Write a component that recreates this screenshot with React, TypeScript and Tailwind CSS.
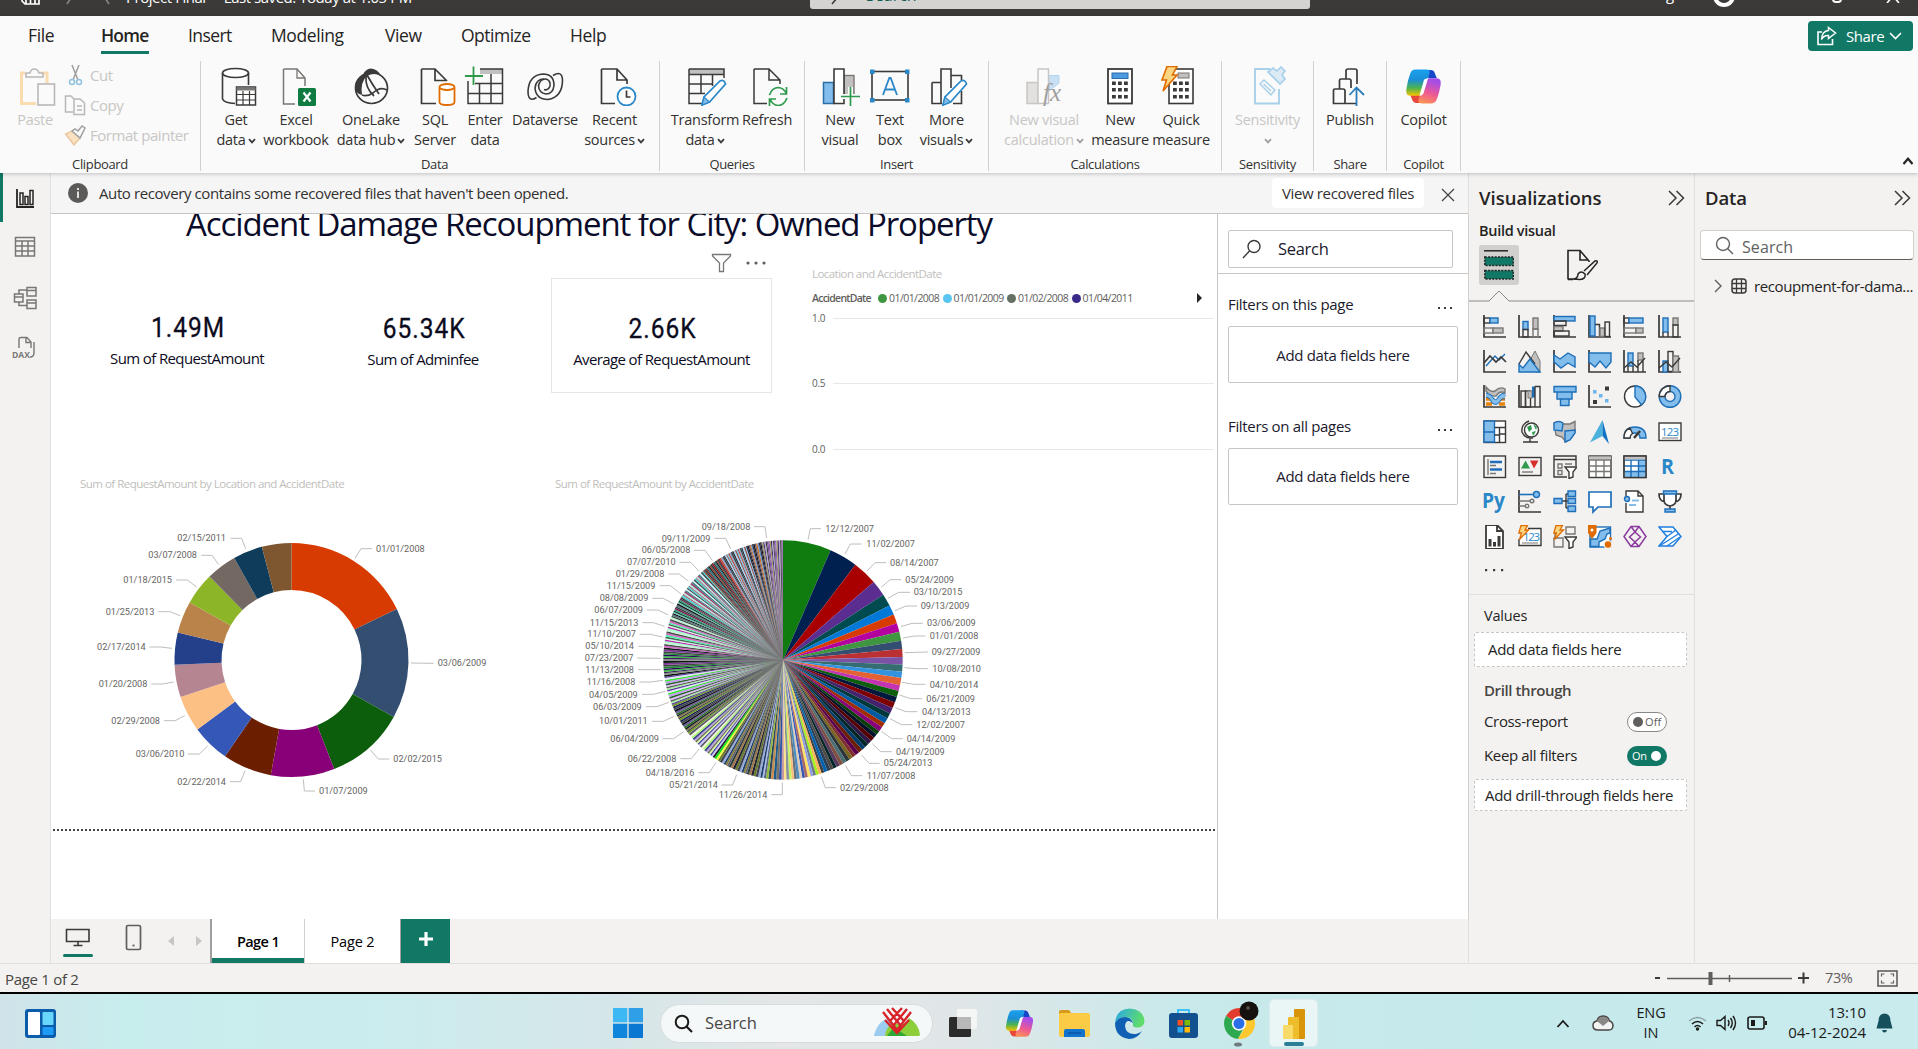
import React from "react";

const D = "#3b3a39";
const B = "#1e6fb8";
const L = "#83bdec";
const G = "#c2c0be";
const M = "#797775";

/* ---------- shared pieces ---------- */

function Svg({ w, h, children, className = "" }: { w: number; h: number; children: React.ReactNode; className?: string }) {
  return (
    <svg width={w} height={h} viewBox={`0 0 ${w} ${h}`} fill="none" className={`shrink-0 ${className}`}>
      {children}
    </svg>
  );
}

function Caret({ color = D }: { color?: string }) {
  return (
    <svg width="8" height="6" viewBox="0 0 8 6" fill="none" className="inline-block ml-[2px]">
      <path d="M1 1.2 L4 4.4 L7 1.2" stroke={color} strokeWidth="1.8" />
    </svg>
  );
}

function CopilotMark({ size }: { size: number }) {
  return (
    <svg width={size} height={size} viewBox="0 0 36 36" fill="none" className="shrink-0">
      <defs>
        <linearGradient id="cpa" x1="0" y1="0" x2="0" y2="1">
          <stop offset="0" stopColor="#1aa0ee" />
          <stop offset="0.4" stopColor="#1b8fd6" />
          <stop offset="0.7" stopColor="#4cb34f" />
          <stop offset="1" stopColor="#f5c400" />
        </linearGradient>
        <linearGradient id="cpb" x1="0.3" y1="0" x2="0" y2="1">
          <stop offset="0" stopColor="#a64de8" />
          <stop offset="0.5" stopColor="#ee5a92" />
          <stop offset="1" stopColor="#ff9c4a" />
        </linearGradient>
      </defs>
      <path d="M19 2 h6 q3 0 4 3 l2 5 h-8 z" fill="#1448c8" />
      <path d="M17 34 h-6 q-3 0 -4 -3 l-2 -5 h9 z" fill="#e8483c" />
      <path d="M10 1.5 H21 Q25 1.5 23.6 6 L17.5 23 Q16 27 12 27 H5 Q0.500 27 1.300 21 Q2.500 12 5 5.500 Q6.500 1.500 10 1.500 Z" fill="url(#cpa)" />
      <path d="M26 34.500 H16 Q12 34.500 13.400 30 L19 14.500 Q20.500 10 24.500 10 H31 Q35.500 10 34.700 16 Q33.500 24 31 30.500 Q29.500 34.500 26 34.500 Z" fill="url(#cpb)" />
      <path d="M18.500 11.500 Q20 10 22.500 10 L18 24.500 Q17 27 14 27 Z" fill="#fff" />
    </svg>
  );
}

/* ---------- ribbon icons, drawn on a 44x40 field ---------- */

const page = "M9.500 3 H23 L31 12 V20 M9.500 3 V38 H21";

const ribbonIcons: Record<string, React.ReactNode> = {
  get: (
    <>
      <ellipse cx="21.500" cy="7" rx="13" ry="4.500" stroke={D} strokeWidth="1.600" fill="#fff" />
      <path d="M8.500 7 V33 Q10 37 21 37.500 M34.500 7 V19" stroke={D} strokeWidth="1.600" />
      <rect x="22.500" y="21" width="19" height="18" fill="#fff" stroke={D} strokeWidth="1.500" />
      <path d="M22.500 23 h19" stroke={M} strokeWidth="3" />
      <path d="M22.500 28.500h19 M22.500 34h19 M29 25v14 M35.500 25v14" stroke={D} strokeWidth="1.200" />
    </>
  ),
  excel: (
    <>
      <path d={page} stroke={M} strokeWidth="1.500" />
      <path d="M23 3 V12 H31" stroke={M} strokeWidth="1.300" />
      <rect x="24" y="22" width="18" height="18" rx="1.500" fill="#107c41" />
      <path d="M29.500 26.500 L36.500 35.500 M36.500 26.500 L29.500 35.500" stroke="#fff" strokeWidth="2.200" />
    </>
  ),
  onelake: (
    <>
      <ellipse cx="22.500" cy="22" rx="16" ry="15.500" stroke={D} strokeWidth="1.700" />
      <path d="M14 9 Q16 3 22 2.500 Q29 3 32 10 Q25 6 18 10 Q11 16 13 29 Q5 27 6 19 Q8 12 14 9Z" fill={D} />
      <path d="M17 10 Q16 22 25 30 M18 9 Q23 18 30 28 M13 29 Q18 31 24 27 Q31 20 38 24" stroke={D} strokeWidth="1.700" />
    </>
  ),
  sql: (
    <>
      <path d="M8.500 3 H22 L34 15 M8.500 3 V37.500 H23 M22 3 V14.500 H33" stroke={D} strokeWidth="1.700" />
      <path d="M26.500 21.500 V36 Q26.500 39 34 39 Q41.500 39 41.500 36 V21.500" stroke="#e06c00" strokeWidth="1.800" fill="#fff" />
      <ellipse cx="34" cy="21" rx="7.500" ry="3" stroke="#e06c00" strokeWidth="1.800" fill="#fff" />
    </>
  ),
  enter: (
    <>
      <rect x="17" y="3" width="22.500" height="5" fill={G} />
      <path d="M5 15 V37.500 H39.500 V3 H17 M5 27.500 H39.500 M12 17.500 H39.500 M16.500 17 V37 M28 8 V37" stroke={D} strokeWidth="1.500" />
      <path d="M10.500 0.500 V19 M2 10 H20" stroke="#2e9a4c" strokeWidth="1.800" />
    </>
  ),
  dataverse: (
    <>
      <path d="M13.500 31.500 Q5 37 5 25 Q6 9 20 8 Q31 8 31 19.500 Q30 28 23 28 Q16 27 15.500 20 Q17 12.500 23 13 Q28 14.500 27 20 Q25 25 21 23.500" stroke={D} strokeWidth="1.600" />
      <path d="M30 9.500 Q39 4 39.500 14 Q39.500 31 25 33.500 Q13 33.500 12 22 Q13 13 21 13" stroke={D} strokeWidth="1.600" />
    </>
  ),
  recent: (
    <>
      <path d="M8.500 3 H24 L34 14 V18 M8.500 3 V37.500 H22 M24 3 V14 H34" stroke={D} strokeWidth="1.700" />
      <circle cx="33.500" cy="30.500" r="9" stroke="#2b88c8" strokeWidth="1.800" fill="#fff" />
      <path d="M33.500 24.500 V31 H37.500" stroke={D} strokeWidth="1.700" />
    </>
  ),
  transform: (
    <>
      <rect x="6" y="3" width="35" height="5" fill={G} />
      <path d="M6 3 H41 V8.500 H6 M6 3 V37.500 H19 M41 3 V12 M18 8.500 V27 M29.500 8.500 V20 M6 18 H30 M6 27.500 H22" stroke={D} strokeWidth="1.500" />
      <path d="M19 39 L21 31 L37 15 Q41 13 42.500 18 L26.500 36 Z" fill="#fff" stroke="#2b88c8" strokeWidth="1.700" />
      <path d="M19 39 L21 31 L26.500 36 Z" fill="#83bdec" stroke="#2b88c8" strokeWidth="1.200" />
    </>
  ),
  refresh: (
    <>
      <path d="M9 3 H24 L35 14 V18 M9 3 V37.500 H22 M24 3 V14 H35" stroke={D} strokeWidth="1.500" />
      <path d="M24.500 29 Q27 21.500 33.500 21.500 Q39 22 41.500 28 M41.500 21 V28 H35 M42 32 Q39 39.500 33 39.500 Q27.500 39 25 33 M24.500 40 V33 H31" stroke="#2e9a4c" strokeWidth="1.700" />
    </>
  ),
  newvisual: (
    <>
      <rect x="26" y="9.500" width="10" height="20" fill={G} stroke={M} strokeWidth="1.400" />
      <rect x="5.500" y="16.500" width="10" height="21" fill={L} stroke="#2b6ea8" strokeWidth="1.500" />
      <path d="M16 3 H26 V37.500 H16 Z" fill="#fff" stroke={D} strokeWidth="1.600" />
      <path d="M32.500 21 V40 M23 30.500 H42" stroke="#fafafa" strokeWidth="5" />
      <path d="M32.500 21 V40 M23 30.500 H42" stroke="#2e9a4c" strokeWidth="1.700" />
    </>
  ),
  textbox: (
    <>
      <rect x="4" y="5.500" width="36" height="28.500" stroke={D} strokeWidth="1.600" />
      {[[2, 3.5], [37, 3.5], [2, 32], [37, 32]].map(([x, y]) => (
        <rect key={`${x}-${y}`} x={x} y={y} width="4.500" height="4.500" fill="#2b88c8" />
      ))}
      <path d="M15 29 L21.300 12 H22.700 L29 29 M17.500 23.500 H26.500" stroke="#2b88c8" strokeWidth="1.800" />
    </>
  ),
  more: (
    <>
      <path d="M7 16.500 H16 M7 16.500 V37.500 H17 M16 37.500 V3 H26 V22 M26 9.500 H36.500 V14 M28 37.500 H36.500 V25" stroke={D} strokeWidth="1.600" />
      <path d="M18 39 L20 31 L36 15 Q40 13 41.500 18 L25.500 36 Z" fill="#fff" stroke="#2b88c8" strokeWidth="1.700" />
      <path d="M18 39 L20 31 L25.500 36 Z" fill="#83bdec" stroke="#2b88c8" strokeWidth="1.200" />
    </>
  ),
  calc: (
    <>
      <rect x="5" y="16.500" width="11" height="21" fill="#e3e1df" stroke="#c8c6c4" strokeWidth="1.500" />
      <path d="M27 9.500 H37 V17 L27 25 Z" fill="#c7e0f4" stroke="#b5d4ee" />
      <rect x="16" y="3" width="10.500" height="34.500" fill="#fafafa" stroke="#c8c6c4" strokeWidth="1.500" />
      <text x="21" y="35" fontFamily="Liberation Serif, serif" fontStyle="italic" fontSize="25" fill="#a19f9d">fx</text>
    </>
  ),
  measure: (
    <>
      <rect x="10" y="3" width="24" height="34.500" stroke={D} strokeWidth="1.800" fill="#fff" />
      <rect x="14" y="7" width="16" height="5.500" fill="#4a9be0" stroke="#2b6ea8" />
      {[15.5, 22, 29].map((y) => [14, 20, 26].map((x) => <rect key={`${x}-${y}`} x={x} y={y} width="3.800" height="3.500" fill={D} />))}
    </>
  ),
  quick: (
    <>
      <rect x="10" y="3" width="24" height="34.500" stroke={D} strokeWidth="1.600" fill="#fff" />
      <rect x="19" y="7" width="11" height="5" fill={G} stroke={M} />
      {[15.5, 22, 29].map((y) => [14, 20, 26].map((x) => <rect key={`${x}-${y}`} x={x} y={y} width="3.800" height="3.500" fill={D} />))}
      <path d="M8 0.500 H18 L13.500 9 H18 L4 25 L7.500 14 H3 Z" fill="#fcd583" stroke="#e06c00" strokeWidth="1.600" />
    </>
  ),
  sensitivity: (
    <>
      <path d="M24 3 H9 V37.500 H33 V23" stroke="#a9d0ea" strokeWidth="1.900" />
      <path d="M14 18 L18 14 L29 24 L25 29 Z M17.500 18 L25 25" stroke="#a9d0ea" strokeWidth="1.500" />
      <path d="M22 6 L27 2 L31 5 L35 1 L39 5 L36 9 L39 13 L34 18 Z" fill="#dbeaf4" stroke="#a9d0ea" strokeWidth="1.700" />
    </>
  ),
  publish: (
    <>
      <path d="M5.500 37.500 V24 Q5.500 23 7 23 H15 Q17 23 17 25 V37.500 Z M11.500 23 V14.500 Q11.500 13 13 13 H21 Q23 13 23 15 V22 M18 13 V5 Q18 3 20 3 H27 Q29 3 29 5 V18 M17 37.500 H28" stroke={D} strokeWidth="1.700" />
      <path d="M28.500 40 V21.500 M21.500 29 L28.500 21.500 L36 29" stroke="#2b7cb8" strokeWidth="1.800" />
    </>
  ),
};

function RB({ icon, a, b, caret, dim, className }: { icon: string; a: string; b?: string; caret?: boolean; dim?: boolean; className: string }) {
  return (
    <div className={`flex flex-col items-center shrink-0 ${dim ? "text-[#c8c6c4]" : "text-[#323130]"} ${className}`}>
      <div className="h-10 flex items-center justify-center">
        {icon === "copilot" ? <CopilotMark size={37} /> : <Svg w={44} h={40}>{ribbonIcons[icon]}</Svg>}
      </div>
      <div className="text-[14.5px] leading-5 text-center whitespace-nowrap tracking-[-0.25px] mt-[4px]">
        <div>{a}</div>
        <div className="h-5">
          {b}
          {caret && <Caret color={dim ? "#a19f9d" : D} />}
        </div>
      </div>
    </div>
  );
}

function Group({ label, className, children }: { label: string; className: string; children: React.ReactNode }) {
  return (
    <div className={`relative h-[110px] mt-[3px] border-r border-[#d2d0ce] flex flex-col shrink-0 ${className}`}>
      <div className="flex h-[92px] shrink-0 pt-[5px]">{children}</div>
      <div className="text-[13px] leading-[17px] pt-[3px] text-center text-[#323130] tracking-[-0.35px]">{label}</div>
    </div>
  );
}

function TitleBar() {
  return (
    <div className="relative h-4 shrink-0 bg-[#3b3a38] overflow-hidden text-white">
      <div className="absolute left-[21px] -top-[12px] flex items-center">
        <Svg w={20} h={17}><path d="M1 0 V13 L4 16 H18 V0 M5 16 V8 H14 V16 M9.500 16 V11" stroke="#fff" strokeWidth="1.700" /></Svg>
      </div>
      <div className="absolute left-[66px] -top-[5px] flex gap-[27px]">
        <Svg w={9} h={10}><path d="M7 0 L1 9" stroke="#8a8886" strokeWidth="1.500" /></Svg>
        <Svg w={9} h={10}><path d="M1 0 L7 9" stroke="#8a8886" strokeWidth="1.500" /></Svg>
      </div>
      <div className="absolute left-[126px] -top-[13px] text-[15px] leading-5 whitespace-pre tracking-[-0.46px]">Project Final  -  Last saved: Today at 1:05 PM</div>
      <div className="absolute left-[810px] -top-[20px] h-[29px] w-[500px] rounded-[3px] bg-[#d4d3d1] text-[#0f5c4d] text-[16px] leading-[30px] pl-[56px]">Search</div>
      <div className="absolute left-[831px] -top-[2px]"><Svg w={8} h={8}><path d="M1 6 L6 0" stroke="#3b3a38" strokeWidth="1.600" /></Svg></div>
      <div className="absolute left-[1666px] -top-[16px] text-[15px] leading-5">g</div>
      <div className="absolute left-[1713px] -top-[15px] size-[22px] rounded-full border-[4px] border-white" />
      <div className="absolute left-[1832px] -top-[8px] h-[11px] w-[10px] rounded-sm border-2 border-white" />
      <div className="absolute left-[1886px] -top-[9px]"><Svg w={14} h={12}><path d="M1 12 L7 5 L13 12" stroke="#fff" strokeWidth="1.600" /></Svg></div>
    </div>
  );
}

function Ribbon() {
  return (
    <div className="relative z-10 h-[157px] shrink-0 bg-[#fafafa] shadow-[0_1px_4px_rgba(0,0,0,0.22)]">
      <div className="flex h-[42px] items-start justify-between pr-[5px]">
        <div className="flex text-[17.5px] leading-6 pt-[7px] tracking-[-0.4px] text-[#252423] whitespace-nowrap">
          <div className="w-[73px] pl-[28px]">File</div>
          <div className="w-[87px] pl-[28px] font-semibold"><span className="inline-block w-[48px] h-[31px] border-b-[3px] border-[#117865] tracking-[-0.8px]">Home</span></div>
          <div className="w-[83px] pl-[28px] tracking-[-0.6px]">Insert</div>
          <div className="w-[114px] pl-[28px]">Modeling</div>
          <div className="w-[76px] pl-[28px]">View</div>
          <div className="w-[109px] pl-[28px] tracking-[-0.5px]">Optimize</div>
          <div className="pl-[28px]">Help</div>
        </div>
        <div className="mt-[5px] h-[30px] w-[105px] rounded-[4px] bg-[#117865] text-white flex items-center pl-[9px] text-[15px]">
          <Svg w={20} h={20}>
            <path d="M5 6 H1 V18.500 H15.500 V13" stroke="#fff" strokeWidth="1.600" />
            <path d="M11.500 1.500 L18.500 7 L11.500 12.500 V9.500 Q7 9 4.500 13.500 Q5 5 11.500 4.500 Z" stroke="#fff" strokeWidth="1.500" />
          </Svg>
          <span className="ml-[9px] tracking-[-0.4px]">Share</span>
          <Svg w={13} h={8} className="ml-[5px]"><path d="M1 1 L6.500 6.500 L12 1" stroke="#fff" strokeWidth="1.600" /></Svg>
        </div>
      </div>
      <div className="flex">
        <Group label="Clipboard" className="w-[201px]">
          <div className="w-[62px] pl-[10px] shrink-0 text-[#c8c6c4] text-[14.5px] flex flex-col items-center">
            <Svg w={44} h={40} className="ml-[7px]">
              <path d="M7 7 H3.500 V37.500 H18 M23 7 H29 V17" stroke="#fbdcae" strokeWidth="3" />
              <path d="M8 11 V7 H12 Q13 3 16 3 Q20 3 21 7 H25 V11 Z" fill="#fafafa" stroke="#bab8b6" strokeWidth="1.500" />
              <rect x="20" y="18" width="16.500" height="21" fill="#fafafa" stroke="#bab8b6" strokeWidth="1.600" />
            </Svg>
            <div className="mt-[4px] leading-5 pr-[2px] tracking-[-0.3px]">Paste</div>
          </div>
          <div className="flex flex-col text-[#c8c6c4] text-[15px] whitespace-nowrap tracking-[-0.45px] ml-[2px]">
            <div className="flex items-center h-[30px] -mt-[6px] gap-[3px]"><Svg w={23} h={22}><path d="M8 1 L14 16 M15 1 L9 16" stroke="#a19f9d" strokeWidth="1.500" /><circle cx="8" cy="18" r="2.500" stroke="#8fc3e0" strokeWidth="1.500" /><circle cx="15" cy="18" r="2.500" stroke="#8fc3e0" strokeWidth="1.500" /></Svg>Cut</div>
            <div className="flex items-center h-[30px] gap-[3px]"><Svg w={23} h={22}><path d="M9 18 H1.500 V2 H7 L10 5 M10 5 H16 L20.500 9 V20.500 H10 Z M13 12 H18 M13 16 H18" stroke="#bab8b6" strokeWidth="1.500" /></Svg>Copy</div>
            <div className="flex items-center h-[30px] gap-[3px]"><Svg w={23} h={22}><path d="M1.500 10 L8 7 L16 14 L10 21 Z" fill="#f9e0c0" stroke="#e8c49a" strokeWidth="1.300" /><path d="M8 7 L16 14 L21 4 L18 2 L14 7 L11 5 Z" fill="#fafafa" stroke="#a19f9d" strokeWidth="1.500" /></Svg>Format painter</div>
          </div>
        </Group>
        <Group label="Data" className="w-[459px] pl-[9px]">
          <RB icon="get" a="Get" b="data" caret className="w-[52px]" />
          <RB icon="excel" a="Excel" b="workbook" className="w-[68px]" />
          <RB icon="onelake" a="OneLake" b="data hub" caret className="w-[78px] ml-[2px]" />
          <RB icon="sql" a="SQL" b="Server" className="w-[50px]" />
          <RB icon="enter" a="Enter" b="data" className="w-[50px]" />
          <RB icon="dataverse" a="Dataverse" className="w-[70px]" />
          <RB icon="recent" a="Recent" b="sources" caret className="w-[69px]" />
        </Group>
        <Group label="Queries" className="w-[145px] pl-[12px] pr-[12px]">
          <RB icon="transform" a="Transform" b="data" caret className="w-[66px]" />
          <RB icon="refresh" a="Refresh" className="w-[50px] ml-[4px]" />
        </Group>
        <Group label="Insert" className="w-[184px] pl-[10px] pr-[10px]">
          <RB icon="newvisual" a="New" b="visual" className="w-[50px]" />
          <RB icon="textbox" a="Text" b="box" className="w-[50px]" />
          <RB icon="more" a="More" b="visuals" caret className="w-[63px]" />
        </Group>
        <Group label="Calculations" className="w-[233px] pl-[10px] pr-[10px]">
          <RB icon="calc" a="New visual" b="calculation" caret dim className="w-[90px]" />
          <RB icon="measure" a="New" b="measure" className="w-[60px] ml-px" />
          <RB icon="quick" a="Quick" b="measure" className="w-[60px] ml-px" />
        </Group>
        <Group label="Sensitivity" className="w-[92px]">
          <RB icon="sensitivity" a="Sensitivity" caret dim className="w-[91px]" />
        </Group>
        <Group label="Share" className="w-[73px]">
          <RB icon="publish" a="Publish" className="w-[72px]" />
        </Group>
        <Group label="Copilot" className="w-[74px]">
          <RB icon="copilot" a="Copilot" className="w-[73px]" />
        </Group>
        <div className="flex-1 flex justify-end items-end pr-[4px] pb-[6px]">
          <Svg w={12} h={8}><path d="M1.500 7 L6 1.800 L10.500 7" stroke="#252423" strokeWidth="2.200" /></Svg>
        </div>
      </div>
    </div>
  );
}

function LeftRail() {
  return (
    <div className="w-[51px] shrink-0 bg-[#f3f2f1] border-r border-[#e1dfdd] flex flex-col items-center relative">
      <div className="absolute left-0 top-0 h-[49px] w-[3px] bg-[#117865]" />
      <div className="h-[49px] flex items-center"><Svg w={20} h={20}><path d="M2 1 V19 H19" stroke="#252423" strokeWidth="1.800" /><path d="M5 5 H8 V16.500 H5 Z M10 8.500 H13 V16.500 H10 Z M15 2.500 H18 V16.500 H15Z" stroke="#252423" strokeWidth="1.500" /></Svg></div>
      <div className="h-[50px] flex items-center"><Svg w={22} h={22}><path d="M1.500 1.500 H20.500 V20 H1.500 Z M1.500 5 H20.500 M1.500 10 H20.500 M1.500 15 H20.500 M8 5 V20 M14 5 V20" stroke={M} strokeWidth="1.500" /></Svg></div>
      <div className="h-[52px] flex items-center"><Svg w={24} h={24}><path d="M14 1.500 H23 V10 H14 Z M14 4.500 H23 M14 14 H23 V22.500 H14 Z M14 17 H23 M1.500 8 H10 V16 H1.500 Z M1.500 11 H10 M6 8 V4 H14 M6 16 V19.500 H14" stroke={M} strokeWidth="1.500" /></Svg></div>
      <div className="h-[48px] flex items-center"><Svg w={24} h={24} className="mr-[2px]"><path d="M7 12 V3 Q7 1.500 9 1.500 H15 L19 6 V12 M14 1.500 V6.500 H19 M22 6 V17 Q22 21 18 21" stroke={M} strokeWidth="1.400" /><text x="0" y="21.500" fontSize="8.500" fontWeight="700" fontFamily="Open Sans, sans-serif" fill={M}>DAX</text></Svg></div>
    </div>
  );
}

/* ---------- charts ---------- */

type Label = [string, number, number, string];

function arc(cx: number, cy: number, r: number, r0: number, a0: number, a1: number) {
  const p = (rad: number, a: number) => {
    const t = (a * Math.PI) / 180;
    return `${(cx + rad * Math.sin(t)).toFixed(2)} ${(cy - rad * Math.cos(t)).toFixed(2)}`;
  };
  const big = a1 - a0 > 180 ? 1 : 0;
  return r0 > 0
    ? `M${p(r, a0)} A${r} ${r} 0 ${big} 1 ${p(r, a1)} L${p(r0, a1)} A${r0} ${r0} 0 ${big} 0 ${p(r0, a0)} Z`
    : `M${cx} ${cy} L${p(r, a0)} A${r} ${r} 0 ${big} 1 ${p(r, a1)} Z`;
}

function Labels({ left, right }: { left: Label[]; right: Label[] }) {
  const render = (l: Label, x: number) => (
    <g key={l[0] + l[2]}>
      <polyline points={l[3]} stroke="#c0bebc" strokeWidth="3" fill="none" />
      <text x={x} y={l[2] + 10} fontSize="29.500" fontFamily="Roboto, sans-serif" fill="#666462" textLength="146" lengthAdjust="spacingAndGlyphs">{l[0]}</text>
    </g>
  );
  return (
    <>
      {right.map((l) => render(l, l[1]))}
      {left.map((l) => render(l, l[1] - 146))}
    </>
  );
}

const donutStops = [0, 64.2, 119.1, 158.6, 190.2, 214.6, 233.6, 251.5, 267.7, 283.6, 299.5, 315.5, 330.7, 345.3, 360];
const donutColors = ["#d83b01", "#344e71", "#0c5d0c", "#870077", "#6b1e00", "#3457b8", "#fcc084", "#b68592", "#25408a", "#b98349", "#8db528", "#736962", "#0f3c5a", "#7e5731"];
const donutRight: Label[] = [
  ["01/01/2008", 948, 236, "885,265 903,236 936,236"],
  ["03/06/2009", 1133, 578, "1053,579 1121,580"],
  ["02/02/2015", 1000, 866, "931,840 955,867 988,867"],
  ["01/07/2009", 777, 962, "730,928 733,963 765,963"],
];
const donutLeft: Label[] = [
  ["02/15/2011", 498, 203, "557,236 545,205 512,205"],
  ["03/07/2008", 411, 254, "476,284 456,256 424,256"],
  ["01/18/2015", 336, 329, "410,351 382,330 348,330"],
  ["01/25/2013", 283, 425, "360,437 330,425 295,425"],
  ["02/17/2014", 257, 530, "336,535 302,531 268,531"],
  ["01/20/2008", 262, 641, "341,636 308,642 274,642"],
  ["02/29/2008", 300, 751, "374,737 346,752 312,752"],
  ["03/06/2010", 373, 851, "443,828 418,852 384,852"],
  ["02/22/2014", 498, 935, "555,902 542,935 510,935"],
];

function Donut() {
  return (
    <svg width="480" height="360" viewBox="0 0 1440 1080" fill="none">
      {donutColors.map((c, i) => (
        <path key={c} d={arc(694.5, 570, 351, 210, donutStops[i], donutStops[i + 1])} fill={c} />
      ))}
      <Labels left={donutLeft} right={donutRight} />
    </svg>
  );
}

const pieRight: Label[] = [
  ["12/12/2007", 796, 86, "744,119 751,86 783,86"],
  ["11/02/2007", 919, 131, "855,162 871,132 905,132"],
  ["08/14/2007", 990, 188, "921,213 945,188 978,188"],
  ["05/24/2009", 1036, 239, "964,262 990,239 1023,239"],
  ["03/10/2015", 1061, 275, "984,295 1016,277 1050,277"],
  ["09/13/2009", 1082, 317, "1005,332 1038,318 1071,318"],
  ["03/06/2009", 1101, 368, "1023,380 1056,370 1088,370"],
  ["01/01/2008", 1109, 407, "1029,414 1062,408 1096,408"],
  ["09/27/2009", 1115, 455, "1034,458 1104,456"],
  ["10/08/2010", 1117, 506, "1033,503 1068,506 1104,506"],
  ["04/10/2014", 1109, 554, "1026,547 1062,553 1096,553"],
  ["06/21/2009", 1099, 596, "1018,585 1052,596 1086,596"],
  ["04/13/2013", 1086, 635, "1006,623 1038,635 1072,635"],
  ["12/02/2007", 1069, 674, "990,656 1024,674 1057,674"],
  ["04/14/2009", 1040, 716, "965,694 995,716 1028,716"],
  ["04/19/2009", 1008, 755, "937,731 962,755 995,755"],
  ["05/24/2013", 971, 788, "904,764 927,790 959,790"],
  ["11/07/2008", 920, 827, "857,797 874,827 907,827"],
  ["02/29/2008", 840, 863, "784,830 796,863 828,863"],
];
const pieLeft: Label[] = [
  ["11/26/2014", 622, 884, "667,847 667,884 634,884"],
  ["05/21/2014", 474, 854, "530,824 518,855 485,855"],
  ["04/18/2016", 403, 818, "468,787 448,818 415,818"],
  ["06/22/2008", 349, 776, "417,747 394,776 361,776"],
  ["06/04/2009", 297, 716, "371,695 341,716 308,716"],
  ["10/01/2011", 263, 662, "342,649 310,664 276,664"],
  ["06/03/2009", 245, 620, "326,607 291,620 258,620"],
  ["04/05/2009", 233, 583, "316,574 280,583 246,583"],
  ["11/16/2008", 226, 545, "309,541 272,546 238,546"],
  ["11/13/2008", 222, 509, "302,509 234,509"],
  ["07/23/2007", 220, 473, "302,475 232,474"],
  ["05/10/2014", 222, 437, "308,441 268,439 235,439"],
  ["11/10/2007", 228, 401, "307,411 272,403 239,403"],
  ["11/15/2013", 235, 368, "314,379 280,368 247,368"],
  ["06/07/2009", 249, 329, "325,345 294,330 261,330"],
  ["08/08/2009", 265, 293, "341,312 310,295 277,295"],
  ["11/15/2009", 286, 257, "363,282 331,257 299,257"],
  ["01/29/2008", 313, 221, "386,244 358,222 325,222"],
  ["07/07/2010", 347, 185, "417,214 392,187 359,187"],
  ["06/05/2008", 391, 149, "457,181 435,151 402,151"],
  ["09/11/2009", 451, 116, "512,147 497,115 463,115"],
  ["09/18/2008", 571, 80, "620,115 615,80 582,80"],
];

const pieHead: [number, string][] = [
  [23.4, "#107c10"], [37.2, "#002050"], [49.3, "#a80000"], [56.9, "#5c2d91"], [62.9, "#004b50"], [67.7, "#0078d7"],
  [72.1, "#d83b01"], [76.4, "#b4009e"], [80.8, "#409640"], [84.7, "#344e71"], [88.6, "#ba3033"], [92.1, "#7b53a6"],
  [95.6, "#346e72"], [98.7, "#3393df"], [102.2, "#e36133"], [105, "#c333b2"], [108, "#0c5d0c"], [110.8, "#00183c"],
  [113.7, "#7e0000"], [116.6, "#45226d"], [119.2, "#00383c"], [121.9, "#005aa1"], [124.2, "#a22c01"], [126.5, "#870077"],
  [128.5, "#083e08"], [130.5, "#001028"], [132.6, "#540000"], [134.6, "#2e1749"], [136.6, "#002628"], [138.6, "#003c6b"],
  [140.6, "#6c1e01"], [142.6, "#5a004f"], [144.4, "#802f31"], [146.2, "#7a651e"], [148, "#2a3338"], [149.8, "#4a7074"],
  [151.6, "#7f4f42"], [153.4, "#573a5c"], [155, "#00282a"], [156.6, "#4f4a46"], [158.2, "#2d3e52"], [159.8, "#0063b1"],
  [161.2, "#3a4046"], [162.6, "#fcb05c"], [164, "#a4ef1d"], [165.3, "#6c7a86"], [166.6, "#8f9ee0"], [168, "#ffe066"],
  [169.4, "#a86868"], [170.7, "#3457b8"], [172, "#dccbb8"], [173.3, "#4a8bc0"], [174.6, "#66727c"], [175.8, "#fbbb7c"],
  [177, "#c4f25e"], [178.4, "#8a939c"],
];

const tailZones: [number, number, string[]][] = [
  [190, 1.15, ["#aab8f0", "#fbe38a", "#c49aa0", "#2f4fa8", "#7c7469", "#1b5a8c", "#c68d50", "#2d4657", "#8fb83a", "#5a6a84"]],
  [213, 1.0, ["#5c6470", "#8a7c34", "#1c3f68", "#94a8d8", "#3b3f52", "#6b7a2c", "#1f2430", "#a0764a", "#2b3c3c"]],
  [216, 0.9, ["#1414b8", "#f8f840", "#18e818", "#202030"]],
  [232, 0.85, ["#c8c4f4", "#4f46a8", "#d8ff9c", "#6a7058", "#b8a4d8", "#3c3c90", "#a8f878", "#f4f4dc", "#5a5a6a"]],
  [248, 0.8, ["#1c1c58", "#6f9c20", "#3a3a40", "#8a7848", "#14202c", "#2c7020", "#6c5c98", "#0c0c1c", "#40484c"]],
  [262, 0.8, ["#c898f8", "#38e838", "#e4e4f8", "#5a38a0", "#a8f8a0", "#5c5c5c", "#d8b8f8", "#286828"]],
  [276, 0.8, ["#2c0858", "#1f8838", "#404840", "#7c3898", "#0c1810", "#8a9088", "#3c1c5c", "#3cb848"]],
  [291, 0.75, ["#9fffc8", "#b82ca8", "#d8f8e8", "#486858", "#48f8a8", "#d868c8", "#4c4c4c", "#c8f0d8"]],
  [302, 0.7, ["#0c3c38", "#2ca870", "#801058", "#384840", "#587878", "#181020", "#68c8a8"]],
  [318, 0.7, ["#a8f0e0", "#a03868", "#388088", "#d8f4f4", "#404848", "#38d8d8", "#b07888"]],
  [328, 0.65, ["#104048", "#901018", "#404848", "#287880", "#101418", "#984030"]],
  [342, 0.65, ["#68c8f0", "#c04838", "#88a0c8", "#384048", "#303840", "#a0d8f8", "#985050"]],
  [350, 0.6, ["#181018", "#685c68", "#d07020", "#6890c8", "#202840"]],
  [360, 0.55, ["#8858b8", "#a0a058", "#402c68", "#b8a8d8", "#383838", "#785090"]],
];

const pieSlices = (() => {
  const out = pieHead.slice();
  let a = 178.4;
  let i = 0;
  for (const [end, step, colors] of tailZones) {
    while (a < end) {
      i += 1;
      a = Math.min(end, a + step * (0.85 + 0.3 * Math.abs(Math.sin(i * 12.9))));
      out.push([a, colors[i % colors.length]]);
    }
  }
  return out;
})();

function Pie() {
  return (
    <svg width="480" height="320" viewBox="0 0 1440 960" fill="none">
      <defs>
        <radialGradient id="core" gradientUnits="userSpaceOnUse" cx="669" cy="480" r="359">
          <stop offset="0" stopColor="#6c6c6c" stopOpacity="0.75" />
          <stop offset="0.4" stopColor="#6c6c6c" stopOpacity="0.25" />
          <stop offset="0.8" stopColor="#6c6c6c" stopOpacity="0" />
        </radialGradient>
      </defs>
      {pieSlices.map(([end, c], i) => (
        <path key={i} d={arc(669, 480, 359, 0, i ? pieSlices[i - 1][0] : 0, end)} fill={c} />
      ))}
      <path d={arc(669, 480, 359, 0, 190, 359.9)} fill="url(#core)" />
      <Labels left={pieLeft} right={pieRight} />
    </svg>
  );
}

function Kpi({ value, label, className }: { value: string; label: string; className: string }) {
  return (
    <div className={`absolute flex flex-col items-center ${className}`}>
      <div className="font-['Roboto'] text-[28.5px] leading-8 tracking-[1.2px] pl-[2px] text-[#0b0b1e] scale-x-[0.86] [-webkit-text-stroke:0.3px_#0b0b1e]">{value}</div>
      <div className="text-[15px] leading-5 mt-[4px] text-[#0b0b1e] tracking-[-0.62px] whitespace-nowrap">{label}</div>
    </div>
  );
}

function Canvas() {
  return (
    <div className="relative flex-1 bg-white overflow-hidden border-r border-[#c8c6c4]">
      <div className="absolute left-[135px] -top-[12px] text-[33px] leading-[44px] tracking-[-1.08px] whitespace-nowrap text-[#0b0b2a]">Accident Damage Recoupment for City: Owned Property</div>
      <Kpi value="1.49M" label="Sum of RequestAmount" className="left-[36px] top-[98px] w-[200px]" />
      <Kpi value="65.34K" label="Sum of Adminfee" className="left-[272px] top-[99px] w-[200px]" />
      <div className="absolute left-[500px] top-[64px] w-[221px] h-[115px] border border-[#e6e6e6]" />
      <Kpi value="2.66K" label="Average of RequestAmount" className="left-[500px] top-[99px] w-[221px]" />
      <div className="absolute left-[660px] top-[39px] flex items-center gap-[14px]">
        <Svg w={21} h={20}><path d="M1.500 1.500 H19.500 V3 L12.500 10 V18.500 H8.500 V10 L1.500 3 Z" stroke={M} strokeWidth="1.300" /></Svg>
        <Svg w={20} h={20}><circle cx="2" cy="10" r="1.600" fill="#605e5c" /><circle cx="10" cy="10" r="1.600" fill="#605e5c" /><circle cx="18" cy="10" r="1.600" fill="#605e5c" /></Svg>
      </div>

      <div className="absolute left-[761px] top-[52px] w-[402px]">
        <div className="text-[11.5px] leading-4 text-[#c0bebc] tracking-[-0.55px]">Location and AccidentDate</div>
        <div className="mt-[8px] flex items-center h-4 text-[10.5px] leading-4 text-[#605e5c] whitespace-nowrap tracking-[-0.55px]">
          <span className="font-semibold w-[66px] tracking-[-0.75px]">AccidentDate</span>
          {[["01/01/2008", "bg-[#409640]"], ["01/01/2009", "bg-[#5bc5f2]"], ["01/02/2008", "bg-[#637062]"], ["01/04/2011", "bg-[#3a2a8c]"]].map(([t, c]) => (
            <span key={t} className="flex items-center w-[64.5px]"><i className={`size-[9px] rounded-full mr-[2px] shrink-0 ${c}`} />{t}</span>
          ))}
          <Svg w={5} h={10} className="ml-auto mr-[12px]"><path d="M0 0 L5 5 L0 10 Z" fill="#252423" /></Svg>
        </div>
        <div className="mt-[2px] flex flex-col text-[10px] text-[#605e5c] tracking-[-0.3px]">
          {["1.0", "0.5", "0.0"].map((t) => (
            <div key={t} className="flex items-center h-[20px] mb-[45.6px]"><span className="w-[21px]">{t}</span><span className="h-px flex-1 bg-[#e9e8e7]" /></div>
          ))}
        </div>
      </div>

      <div className="absolute left-[29px] top-[262px] text-[11.5px] leading-4 text-[#c0bebc] tracking-[-0.52px] whitespace-nowrap">Sum of RequestAmount by Location and AccidentDate</div>
      <div className="absolute left-[504px] top-[262px] text-[11.5px] leading-4 text-[#c0bebc] tracking-[-0.52px] whitespace-nowrap">Sum of RequestAmount by AccidentDate</div>
      <div className="absolute left-[9px] top-[256px]"><Donut /></div>
      <div className="absolute left-[509px] top-[286px]"><Pie /></div>
      <div className="absolute left-[2px] right-0 top-[615px] h-[2px] bg-[repeating-linear-gradient(90deg,#444_0_2px,transparent_2px_4px)]" />
    </div>
  );
}

function FilterSection({ title, className, boxClass = "" }: { title: string; className: string; boxClass?: string }) {
  return (
    <div className={className}>
      <div className="flex items-center justify-between pr-[16px] h-[22px]">
        <span className="text-[15px] tracking-[-0.33px]">{title}</span>
        <Svg w={14} h={4} className="mt-[8px]"><rect x="0" y="1" width="2" height="2" fill={D} /><rect x="6" y="1" width="2" height="2" fill={D} /><rect x="12" y="1" width="2" height="2" fill={D} /></Svg>
      </div>
      <div className={`mt-[11px] w-[230px] h-[57px] border border-[#c8c6c4] rounded-[2px] flex items-center justify-center text-[15px] tracking-[-0.35px] ${boxClass}`}>Add data fields here</div>
    </div>
  );
}

function Filters() {
  return (
    <div className="w-[251px] shrink-0 bg-white text-[#1b1a2e] border-r border-[#d2d0ce]">
      <div className="h-[60px] border-b border-[#c8c6c4] pt-[16px] pl-[10px]">
        <div className="w-[225px] h-[38px] border border-[#c8c6c4] rounded-[2px] flex items-center pl-[13px] text-[16.5px] tracking-[-0.3px]">
          <Svg w={20} h={20}><circle cx="12" cy="7.500" r="6" stroke={D} strokeWidth="1.400" /><path d="M7.500 12 L1 19" stroke={D} strokeWidth="1.400" /></Svg>
          <span className="ml-[16px]">Search</span>
        </div>
      </div>
      <FilterSection title="Filters on this page" className="pl-[10px] pt-[19px]" boxClass="pt-[2px]" />
      <FilterSection title="Filters on all pages" className="pl-[10px] pt-[32px]" />
    </div>
  );
}

function PageTabs() {
  return (
    <div className="h-[44px] shrink-0 bg-[#f3f2f1] flex border-r border-[#e1dfdd]">
      <div className="w-[56px] flex flex-col items-center pt-[9px] pr-[2px]">
        <Svg w={26} h={19}><path d="M1.500 1.500 H24 V13.500 H1.500 Z M13 14 V17 M8.500 17.500 H17.500" stroke={D} strokeWidth="1.600" /></Svg>
        <div className="mt-[7px] h-[3px] w-[30px] rounded bg-[#117865]" />
      </div>
      <Svg w={17} h={27} className="ml-[18px] mt-[5px]"><rect x="1.500" y="1.500" width="14" height="24" rx="1.500" stroke="#605e5c" strokeWidth="1.700" /><path d="M7.500 21.500 h2" stroke="#605e5c" strokeWidth="1.800" /></Svg>
      <Svg w={36} h={12} className="ml-[26px] mt-[16px]"><path d="M6 1 L0 6 L6 11 Z M28 1 L34 6 L28 11 Z" fill="#c8c6c4" /></Svg>
      <div className="ml-[6px] w-[94px] bg-white border-l-2 border-[#a19f9d] text-center text-[14.5px] font-semibold tracking-[-0.6px] leading-[45px] relative">Page 1<div className="absolute left-0 right-0 bottom-0 h-[5px] bg-[#117865]" /></div>
      <div className="w-[96px] bg-white border-l border-[#d2d0ce] text-center text-[14.5px] leading-[45px] tracking-[-0.15px]">Page 2</div>
      <div className="w-[50px] bg-[#117865] border-l border-[#a19f9d] flex items-center justify-center pb-[4px]">
        <Svg w={14} h={14}><path d="M7 0 V14 M0 7 H14" stroke="#fff" strokeWidth="3.200" /></Svg>
      </div>
    </div>
  );
}

/* ---------- visual gallery ---------- */

const axis = <path d="M1 0 V22 H23" stroke={D} strokeWidth="1.700" />;
const bolt = <path d="M3 0.500 H9.500 L7 5 H10.500 L1.500 14.500 L3.500 8 H0.800 Z" fill="#fcd583" stroke="#e06c00" strokeWidth="1.300" />;
const s = { stroke: B, strokeWidth: 1.4 };
const d = { stroke: D, strokeWidth: 1.4 };
const m = { stroke: M, strokeWidth: 1.4 };

const gallery: React.ReactNode[] = [
  <>{axis}<rect x="1" y="3" width="6" height="5" {...d} /><rect x="7" y="3" width="8" height="5" fill={L} {...s} /><rect x="1" y="13" width="9" height="5" {...m} /><rect x="10" y="13" width="10" height="5" fill={G} {...m} /></>,
  <>{axis}<rect x="5" y="6.500" width="5" height="8" fill={L} {...s} /><rect x="5" y="14.500" width="5" height="7.500" {...d} /><rect x="15" y="3" width="5" height="11" fill={G} {...m} /><rect x="15" y="14" width="5" height="8" {...m} /></>,
  <>{axis}<rect x="1" y="1.500" width="21" height="4.500" fill={L} {...s} /><path d="M1 6 H13 V10.500 H1" {...d} /><rect x="1" y="11.500" width="9" height="4.500" fill={G} {...m} /><rect x="1" y="16" width="15" height="5" {...d} /></>,
  <>{axis}<rect x="2" y="1" width="5" height="20" fill={L} {...s} /><path d="M7 9.500 H11.500 V21" {...d} /><rect x="12" y="13" width="4.500" height="8.500" fill={G} {...m} /><rect x="17" y="7" width="4.500" height="14.500" {...d} /></>,
  <>{axis}<rect x="1" y="3" width="5" height="5" {...d} /><rect x="6" y="3" width="14" height="5" fill={L} {...s} /><rect x="1" y="13" width="12" height="5" {...m} /><rect x="13" y="13" width="7" height="5" fill={G} {...m} /></>,
  <>{axis}<rect x="5" y="3" width="5" height="14" fill={L} {...s} /><path d="M5 17 V22 M10 17 V22" {...d} /><rect x="15" y="3" width="5" height="7" fill={G} {...m} /><rect x="15" y="10" width="5" height="12" {...d} /></>,
  <>{axis}<path d="M3 16 L12 6 L16 10 L22 4" {...s} /><path d="M1 13 L7 6 L13 12 L18 7 L23 12" {...d} strokeWidth="1.700" /></>,
  <><path d="M12 10 L17 1 L22 11 V22 H17 Z" fill={G} stroke={M} /><path d="M1 14 L8 2 L17 14" {...d} /><path d="M1 22 V14.500 L5 18 L12 9 L22 22 Z" fill={L} {...s} /></>,
  <>{axis}<path d="M1 5 L7 9 L15 3 L22 7 V17 L15 13 L8 18 L1 12 Z" fill={L} {...s} /></>,
  <>{axis}<path d="M1 3 H23 V12 L18 18 L12 11 L7 17 L1 12 Z" fill={L} {...s} /></>,
  <>{axis}<rect x="5" y="3" width="5" height="13" fill={L} {...s} /><rect x="15" y="3" width="5" height="7" fill={G} {...m} /><path d="M5 22 V16 M10 22 V16 M15 22 V10 M20 22 V10 M1 18 L8 12 L14 17 L22 8" {...d} /></>,
  <>{axis}<rect x="5" y="11" width="5" height="11" fill={L} {...s} /><rect x="10" y="1.500" width="5" height="20" {...d} /><rect x="15" y="6" width="5.500" height="16" fill={G} {...m} /><path d="M1 18 L8 12 L14 17 L22 8" {...d} /></>,
  <>{axis}<path d="M3 2 Q8 8 12 6 Q17 1 22 4 V8 Q17 5 13 11 Q8 12 3 6 Z" fill={G} {...m} /><path d="M3 14 H9 M3 19 H9 M16 14 H22 M16 19 H22" stroke="#e8820c" strokeWidth="3.500" /><path d="M3 10 Q8 10 10 16 Q14 20 16 13 Q19 9 22 12" stroke={L} strokeWidth="4.500" /><path d="M3 8 Q9 9 11 14 Q14 16 16 11 Q19 7 22 9 M3 12 Q7 12 9 18 Q14 22 18 15 Q20 13 22 14" stroke={B} strokeWidth="1" /></>,
  <>{axis}<rect x="3" y="6" width="4.500" height="16" {...d} /><rect x="7.500" y="6" width="5" height="16" {...d} /><rect x="10" y="6" width="4" height="7" fill={G} stroke={M} /><rect x="14" y="1.500" width="3" height="11" fill={B} /><path d="M17 1.500 H22 V22 M17 1.500 V22" {...d} /></>,
  <><path d="M1 1.500 H23 V7 H1 Z M4 7 H19 V14 H4Z M7.500 14 H16 V20.500 H7.500Z" fill={L} {...s} /></>,
  <>{axis}<rect x="5" y="5" width="3.500" height="3.500" fill="#6bb4ec" /><rect x="11" y="9" width="3.500" height="3.500" fill="#6bb4ec" /><rect x="17" y="14" width="3.500" height="3.500" fill="#6bb4ec" /><rect x="17" y="1.500" width="4" height="4" fill={D} /><rect x="5" y="15" width="4" height="4" fill={D} /></>,
  <><circle cx="12" cy="11.500" r="10.500" fill="#fff" {...d} /><path d="M12 1 A10.500 10.500 0 0 1 18.500 19.800 L12 12 Z" fill={L} {...s} /></>,
  <><circle cx="12" cy="11.500" r="8" stroke={L} strokeWidth="5.500" /><path d="M4 11.500 A8 8 0 0 1 12 3.500" stroke="#fff" strokeWidth="5.500" /><circle cx="12" cy="11.500" r="10.800" {...s} /><circle cx="12" cy="11.500" r="5" {...s} /><path d="M1.200 11.500 A10.800 10.800 0 0 1 12 0.700 V6.500 A5 5 0 0 0 7 11.500 Z" {...d} /></>,
  <><rect x="1" y="1" width="21.500" height="21.500" fill="#fff" {...d} /><path d="M1 1 H11.500 V22 H1 Z M1 12 H11.500" fill={L} {...s} /><path d="M11.500 7.500 H22 M16.500 7.500 V22 M11.500 15 H16.500 M16.500 14 H22" {...d} /></>,
  <><circle cx="13.500" cy="10" r="7" fill="#fff" {...d} /><path d="M9 7 L13 5 L14 9 L11 12 Z M15 4 L19 7 L18 10 Z M14 12 L18 11 L15 16Z" fill="#2e9a4c" /><path d="M11 1 Q3 4 4 12 Q7 19 15 18 M12 18 V22 M5 22 H20" {...d} /></>,
  <><path d="M1 3 Q6 0 10 4 L17 4 L22 1.500 V12 L19 17 L13 22 L9 17 L3 15 Z" fill={G} {...m} /><path d="M1 3 Q6 0 10 3 L9 11 L1 10 Z M12 11 L22 10 V13 L17 20 L12 22 Z" fill={L} {...s} /></>,
  <><path d="M14.500 0 L2 22.500 L14.500 16 Z" fill="#4db1dd" /><path d="M14.500 0 L21 24 L14.500 16 Z" fill="#1173c7" /></>,
  <><path d="M1 18 Q1 7 12 7 Q23 7 23 18 H17 Q17 13 12 13 Q7 13 7 18 Z" fill={L} {...s} /><path d="M1 18 Q1 10 7 8 L9.500 13.500 Q7 15 7 18 Z" fill="#fff" {...d} /><path d="M17 11 L11 18" stroke={D} strokeWidth="2.500" /></>,
  <><rect x="1" y="3" width="22" height="17.500" fill="#fff" {...d} /><text x="3" y="15.500" fontSize="11.500" textLength="18" fontFamily="Open Sans, sans-serif" fill="#2b88c8">123</text><path d="M4 18 H20" stroke={M} /></>,
  <><rect x="1" y="1" width="21.500" height="21.500" {...d} /><path d="M5 4 V20" {...m} /><path d="M7 7 H19 M7 14.500 H19" stroke={B} strokeWidth="2.600" /><path d="M7 10.500 H13 M7 18.500 H13" stroke={M} strokeWidth="1.300" /></>,
  <><rect x="1" y="2.500" width="22" height="18" {...d} /><path d="M3 13.500 L7.500 5.500 L12 13.500 Z" fill="#2e9a4c" /><path d="M12 5.500 H20.500 L16 13.500 Z" fill="#d92c2c" /><path d="M4 17 H15" {...m} /></>,
  <><path d="M14 22 H1 V1 H23 V11 M1 4.500 H23" {...d} /><path d="M5 9 h4 v4 h-4z M5 15.500 h4 v4 h-4z M12 9 h7" {...m} /><path d="M12 12 H24 L20 17 V22 L16 23.500 V17 Z" fill="#fff" {...d} /></>,
  <><rect x="1" y="1" width="22" height="21.500" fill="#fff" {...d} /><path d="M1 3 H23" stroke={G} strokeWidth="3" /><path d="M1 5 H23 M1 11 H23 M1 16.500 H23 M8 5 V22 M16 5 V22" {...m} /></>,
  <><rect x="1" y="1" width="22" height="21.500" fill="#fff" {...d} /><path d="M15.500 5 H22.500 V22 H1.500 V17 H15.500 Z" fill={L} /><path d="M1 5 H23 M1 11 H23 M1 16.500 H23 M8 5 V22 M15.500 5 V22" {...s} /><path d="M1 3 H23" stroke={G} strokeWidth="3" /><rect x="1" y="1" width="22" height="21.500" {...d} /></>,
  <text x="3" y="19" fontSize="21" fontWeight="700" textLength="13" lengthAdjust="spacingAndGlyphs" fontFamily="Open Sans, sans-serif" fill="#2b88c8">R</text>,
  <text x="-1" y="17.500" fontSize="21" fontWeight="700" textLength="23" lengthAdjust="spacingAndGlyphs" fontFamily="Open Sans, sans-serif" fill="#2b88c8">Py</text>,
  <>{axis}<path d="M1 4.500 H16" stroke={B} strokeWidth="1.600" /><path d="M1 11 H13 M1 16 H8" {...m} /><circle cx="18.500" cy="4.500" r="3" fill={L} {...s} /><circle cx="14" cy="11" r="1.800" {...m} /><circle cx="9" cy="16" r="1.800" {...m} /></>,
  <><path d="M9 11 H13 M13 4 V18 M13 4 H15 M13 11 H15 M13 18 H15" {...d} /><path d="M1 8.500 H9 V13.500 H1Z M15 1 H22.500 V6.500 H15Z M15 8.500 H22.500 V13.500 H15Z M15 16 H22.500 V21.500 H15Z" fill={L} {...s} /></>,
  <path d="M1 2 H23 V17 H10 L5 22 V17 H1 Z" fill="#fff" stroke={B} strokeWidth="1.700" />,
  <><path d="M3 6 V1 H15 L20 6 V22 H3 V13 M15 1 V6 H20" fill="#fff" {...d} /><circle cx="4" cy="9" r="2.500" fill={L} {...s} /><path d="M9 10.500 H16 M6 15 H13" stroke={L} strokeWidth="1.800" /></>,
  <><path d="M6 2 H18 V10 Q18 15 12 16 Q6 15 6 10 Z M6 4 H1 Q1 11 7 12 M18 4 H23 Q23 11 17 12 M12 16 V20" fill="#fff" {...d} strokeWidth="1.700" /><path d="M5.500 1 H18.500 V4 H5.500Z M7 19 H17 V22 H7Z" fill={L} {...s} /></>,
  <><path d="M3 0 H14 L20 6 V24 H3 Z M14 0 V6 H20" fill="#fff" {...d} strokeWidth="1.800" /><path d="M7 21.500 V14 M11.500 21.500 V17 M16 21.500 V11" stroke={D} strokeWidth="3" /></>,
  <><path d="M10 3.500 H23 V20.500 H1 V14" {...d} fill="#fff" /><text x="5" y="15.500" fontSize="11.500" textLength="17" fontFamily="Open Sans, sans-serif" fill="#2b88c8">123</text><path d="M4 18 H20" stroke={M} />{bolt}</>,
  <><path d="M13 2 h9 v7 h-9z M1 13 h9 v9 h-9z M2 12 V6 h7" {...m} /><path d="M12 12 H24 L20 17 V22 L16 23.500 V17 Z" fill="#fff" {...d} />{bolt}</>,
  <><rect x="2" y="2" width="20.500" height="20" fill="#fff" stroke={B} strokeWidth="1.400" /><path d="M2.500 14 H9 L12 6 L22 3 V8 L19 9 L17 14 L11 17 V21.500 H2.500 Z" fill={L} {...s} /><path d="M0 0 H8.500 V8 L4 14 L0 8 Z" fill="#e06c00" /><circle cx="4" cy="5" r="1.500" fill="#fff" /><circle cx="20" cy="19.500" r="4.500" fill="#f3f2f1" /><circle cx="20" cy="19.500" r="3.200" fill="#e06c00" /><circle cx="22.500" cy="13.500" r="1.500" fill="#e06c00" /></>,
  <path d="M8 1.500 H16 L23 11.500 L16 21.500 H8 L1 11.500 Z M8 1.500 L12 7 L16 1.500 M12 7 L17.500 12 L12 17 L6.500 12 Z M12 17 L8 21.500 M12 17 L16 21.500" stroke="#8b3a9e" strokeWidth="1.500" />,
  <><path d="M1 2 H15 L23 11.500 L15 21 H1 L9 11.500 Z" fill="#fff" stroke="#1e7fe0" strokeWidth="1.500" /><path d="M9 11.500 L18 5 M3 20 L21 8.500 M9 21 L22 12 M5 6.500 H14" stroke="#1e7fe0" strokeWidth="1.300" /></>,
];

function Chevrons() {
  return <Svg w={17} h={16}><path d="M1 1 L8 8 L1 15 M8.500 1 L15.500 8 L8.500 15" stroke={D} strokeWidth="1.500" /></Svg>;
}

function Visualizations() {
  return (
    <div className="w-[226px] shrink-0 bg-[#f3f2f1] border-r border-[#e1dfdd] text-[#252423] text-[15px]">
      <div className="flex items-center justify-between pl-[10px] pr-[9px] h-[50px]">
        <span className="text-[18.5px] font-semibold tracking-[0px]">Visualizations</span>
        <Chevrons />
      </div>
      <div className="pl-[10px] h-[22px] leading-[16px] text-[14.5px] font-semibold tracking-[-0.3px]">Build visual</div>
      <div className="flex pl-[10px]">
        <div className="size-[40px] rounded-[3px] bg-[#d2d0ce] flex items-center justify-center">
          <Svg w={30} h={30}>
            <path d="M0 0.800 H24" stroke="#252423" strokeWidth="1.500" />
            <rect x="0.800" y="7" width="28.500" height="8.500" fill="#117865" stroke="#252423" strokeWidth="1.500" strokeDasharray="2 1.300" />
            <rect x="0.800" y="20.500" width="28.500" height="8.500" fill="#117865" stroke="#252423" strokeWidth="1.500" strokeDasharray="2 1.300" />
          </Svg>
        </div>
        <Svg w={32} h={32} className="ml-[47px] mt-[4px]">
          <path d="M17 30 H2 M2 30.500 V1.500 H14 L23 12 V13 M14 1.500 V11 H22 M2 30.500 H7" stroke="#252423" strokeWidth="1.600" />
          <path d="M8 30 Q12 29 12 25 Q15 21 19 25 Q20 30 14 30.500 Z M18 22 L29 12 Q32 11 31 14 L21 26" fill="#f3f2f1" stroke="#252423" strokeWidth="1.500" />
        </Svg>
      </div>
      <svg width="225" height="12" viewBox="0 0 225 12" fill="none" className="mt-[5px] block"><path d="M0 11 H20 L30 1 L40 11 H225" stroke="#8a8886" /></svg>
      <div className="grid grid-cols-[repeat(6,35px)] auto-rows-[35px] pl-[14px] pt-[13px]">
        {gallery.map((g, i) => <Svg key={i} w={24} h={24}>{g}</Svg>)}
      </div>
      <div className="h-[35px] border-b border-[#e1dfdd] flex pt-[8px] pl-[16px]">
        <Svg w={20} h={4}><rect x="0" y="1" width="2.200" height="2.200" fill={D} /><rect x="8" y="1" width="2.200" height="2.200" fill={D} /><rect x="16" y="1" width="2.200" height="2.200" fill={D} /></Svg>
      </div>
      <div className="pl-[15px] h-[37px] leading-[42px] tracking-[-0.2px] text-[14.5px]">Values</div>
      <div className="ml-[5px] w-[213px] h-[35px] bg-white border border-dashed border-[#c8c6c4] rounded-[2px] pl-[13px] leading-[33px] tracking-[-0.35px]">Add data fields here</div>
      <div className="pl-[15px] h-[38px] leading-[46px] font-semibold tracking-[-0.4px] text-[#484644]">Drill through</div>
      <div className="flex items-center justify-between pl-[15px] pr-[27px] h-[34px] tracking-[-0.35px]">
        <span className="-mt-px">Cross-report</span>
        <div className="w-[40px] h-[20px] rounded-full border border-[#8a8886] bg-white flex items-center pl-[5px]"><i className="size-[10px] rounded-full bg-[#605e5c]" /><span className="ml-[2px] text-[11px] text-[#605e5c] tracking-[0.1px]">Off</span></div>
      </div>
      <div className="flex items-center justify-between pl-[15px] pr-[27px] h-[34px] tracking-[-0.35px]">
        <span className="-mt-px">Keep all filters</span>
        <div className="w-[40px] h-[20px] rounded-full bg-[#117865] flex items-center pl-[5px]"><span className="text-[11px] text-white w-[19px] tracking-[-0.2px]">On</span><i className="size-[10px] rounded-full bg-white" /></div>
      </div>
      <div className="ml-[5px] mt-[6px] w-[213px] h-[32px] bg-white border border-dashed border-[#c8c6c4] rounded-[2px] pl-[10px] leading-[31px] tracking-[-0.3px] whitespace-nowrap">Add drill-through fields here</div>
    </div>
  );
}

function DataPane() {
  return (
    <div className="flex-1 bg-[#f3f2f1] text-[#252423]">
      <div className="flex items-center justify-between pl-[10px] pr-[7px] h-[50px]">
        <span className="text-[18.5px] font-semibold tracking-[-0.1px]">Data</span>
        <Chevrons />
      </div>
      <div className="ml-[5px] mt-[7px] w-[214px] h-[30px] bg-white rounded-[4px] border border-[#d2d0ce] border-b-[#605e5c] flex items-center pl-[14px] text-[16px] text-[#616161] tracking-[0.1px]">
        <Svg w={19} h={19}><circle cx="8" cy="8" r="6.500" stroke="#616161" strokeWidth="1.400" /><path d="M12.500 12.500 L18 18" stroke="#616161" strokeWidth="1.400" /></Svg>
        <span className="ml-[8px] mt-[3px]">Search</span>
      </div>
      <div className="flex items-center pl-[19px] mt-[15px] h-[22px]">
        <Svg w={8} h={14}><path d="M1 1 L7 7 L1 13" stroke="#605e5c" strokeWidth="1.400" /></Svg>
        <Svg w={16} h={16} className="ml-[9px]"><rect x="1" y="1" width="14" height="14" rx="3" stroke={D} strokeWidth="1.500" /><path d="M5.500 1 V15 M10.500 1 V15 M1 5.500 H15 M1 10.500 H15" stroke={D} strokeWidth="1.300" /></Svg>
        <span className="ml-[7px] text-[15px] tracking-[-0.38px] whitespace-nowrap">recoupment-for-dama...</span>
      </div>
    </div>
  );
}

function StatusBar() {
  return (
    <div className="h-[31px] shrink-0 bg-[#f3f2f1] border-t border-[#e1dfdd] border-b-2 border-b-black flex items-center justify-between pl-[5px] pr-[20px] text-[#484644]">
      <span className="text-[15px] tracking-[-0.3px] mt-[2px]">Page 1 of 2</span>
      <div className="flex items-center">
        <Svg w={156} h={16}><path d="M1 8 H6 M144 8 H155 M149.500 2.500 V13.500" stroke={D} strokeWidth="2" /><path d="M13 8.500 H138 M75.500 5 V12" stroke="#605e5c" strokeWidth="1.500" /><path d="M56.500 2 V15" stroke="#605e5c" strokeWidth="4" /></Svg>
        <span className="ml-[15px] w-[52px] text-[14.5px] tracking-[-0.4px] text-[#605e5c]">73%</span>
        <Svg w={21} h={17}><rect x="1" y="1" width="19" height="15" stroke="#605e5c" strokeWidth="1.600" /><path d="M4.500 6.500 V4 H7.500 M13.500 4 H16.500 V6.500 M16.500 10.500 V13 H13.500 M7.500 13 H4.500 V10.500" stroke="#605e5c" strokeWidth="1.200" /></Svg>
      </div>
    </div>
  );
}

function Taskbar() {
  return (
    <div className="h-[55px] pt-[3px] shrink-0 flex items-center text-[#1b1a19] relative bg-[linear-gradient(90deg,#cfe3e9_0px,#c8eded_120px,#ccecee_400px,#d6e6e8_620px,#e4e6e7_780px,#e0e6e8_960px,#c9e9ea_1180px,#c5eaec_1500px,#c9ebed_1918px)]">
      <Svg w={31} h={29} className="ml-[25px]"><rect width="31" height="29" rx="3" fill="#0b5cab" /><rect x="3" y="3" width="12" height="23" rx="1" fill="#fff" /><rect x="17.500" y="3" width="11" height="13" rx="1" fill="#69d6fb" /><rect x="17.500" y="18" width="11" height="8" rx="1" fill="#1e9bf5" /></Svg>
      <Svg w={30} h={30} className="ml-[557px]"><path d="M0 0 H14.300 V14.300 H0Z" fill="#3cb9f5" /><path d="M15.700 0 H30 V14.300 H15.700Z" fill="#2f9fe8" /><path d="M0 15.700 H14.300 V30 H0Z" fill="#0f86dc" /><path d="M15.700 15.700 H30 V30 H15.700Z" fill="#0a78d2" /></Svg>
      <div className="ml-[17px] w-[273px] h-[39px] rounded-full bg-[#f4f8f9] border border-[#d6dcde] flex items-center pl-[13px]">
        <Svg w={19} h={19}><circle cx="8" cy="8" r="6.300" stroke="#1b1a19" strokeWidth="2" /><path d="M12.500 12.500 L18 18" stroke="#1b1a19" strokeWidth="2.200" /></Svg>
        <span className="ml-[12px] text-[16.5px] tracking-[-0.1px] text-[#484644]">Search</span>
        <Svg w={48} h={32} className="ml-auto mr-[11px] -mt-[2px]">
          <path d="M1 29 Q6 12 18 13 L26 30 H3 Q0 30 1 29Z" fill="#9ccdf0" />
          <path d="M12 30 Q14 16 24 18 Q32 20 36 12 Q46 18 47 29 Q47 30 45 30 Z" fill="#8ccf3a" />
          <path d="M14 30 L20 22 L28 26 L34 30 Z" fill="#2ea836" />
          <path d="M10 6 L24 24 L38 6 M14 3 L28 20 M19 2 L31 15 M34 3 L20 20 M29 2 L17 15 M12 14 L24 27 L36 14" stroke="#d8232a" strokeWidth="2.400" />
        </Svg>
      </div>
      <Svg w={30} h={30} className="ml-[15px]"><rect x="1" y="9" width="22" height="20" rx="1.500" fill="#2b2b2b" /><rect x="9" y="1" width="20" height="20" rx="1.500" fill="#f8f8f8" fillOpacity="0.850" /><rect x="9" y="9" width="14" height="12" fill="#b8b8b8" /></Svg>
      <div className="ml-[27px]"><CopilotMark size={29} /></div>
      <Svg w={31} h={27} className="ml-[25px]"><path d="M0 2 Q0 0 2 0 H10 L13 4 H0Z" fill="#d99a1c" /><rect y="3" width="31" height="24" rx="2" fill="#fccb45" /><path d="M5 27 V21 Q5 19 7 19 H24 Q26 19 26 21 V27 Z" fill="#1273cc" /><path d="M9 23 H22" stroke="#0a55a4" strokeWidth="1.500" /></Svg>
      <Svg w={31} h={31} className="ml-[24px]">
        <defs><linearGradient id="edg" x1="0" y1="0" x2="1" y2="0.300"><stop offset="0" stopColor="#2aa7e8" /><stop offset="1" stopColor="#5fdc6b" /></linearGradient></defs>
        <path d="M1 15 Q2 1 16 0.500 Q30 2 30.500 13 Q30 19 24 19.500 Q18 20 19 16 Q19 9 11 9 Q4 9 1 15Z" fill="url(#edg)" />
        <path d="M1 15 Q4 9 11 9 Q17 9 19 15 Q12 10 11 18 Q12 27 22 26 Q26 25 28 23 Q23 31 15 31 Q1 29 1 15Z" fill="#0f5fb4" />
      </Svg>
      <Svg w={29} h={31} className="ml-[24px]"><path d="M9 7 V2 H20 V7" stroke="#3cc0f5" strokeWidth="2" /><rect y="5" width="29" height="25" rx="3" fill="#12518e" /><path d="M8.500 12 h5.500 v5.500 h-5.500z" fill="#f25022" /><path d="M15.500 12 h5.500 v5.500 h-5.500z" fill="#7fba00" /><path d="M8.500 19 h5.500 v5.500 h-5.500z" fill="#2ba8f0" /><path d="M15.500 19 h5.500 v5.500 h-5.500z" fill="#ffb900" /></Svg>
      <div className="ml-[25px] -mt-[2px] relative">
        <Svg w={36} h={50}>
          <path d="M16 27 L3 19 A15.500 15.500 0 0 1 30 19 Z" fill="#e33b2e" />
          <path d="M16 27 L3 19 A15.500 15.500 0 0 0 15 42 L21 30 Z" fill="#2da94f" />
          <path d="M16 27 L22 30 L15 42 A15.500 15.500 0 0 0 30 19 H20 Z" fill="#fdc72e" />
          <circle cx="16" cy="26.500" r="7.200" fill="#fff" /><circle cx="16" cy="26.500" r="5.500" fill="#2a6fe8" />
          <circle cx="26" cy="14" r="9.500" fill="#15110f" /><circle cx="25" cy="11" r="2" fill="#54483e" />
          <ellipse cx="15" cy="47.500" rx="4" ry="2" fill="#707a7c" />
        </Svg>
      </div>
      <div className="ml-[10px] w-[49px] h-[48px] rounded-[5px] bg-[#eaf5f6] border border-[#dcebed] relative flex justify-center pt-[9px]">
        <Svg w={24} h={31}><rect x="12" y="0" width="11" height="30" rx="1" fill="#d99509" /><rect x="6" y="8" width="11" height="22" rx="1" fill="#edbd2c" /><rect x="1" y="16" width="10" height="14" rx="1" fill="#f8da69" /></Svg>
        <div className="absolute bottom-0 left-[14px] h-[4px] w-[20px] rounded-full bg-[#2a7f96]" />
      </div>
      <div className="ml-auto flex items-center pr-[25px]">
        <Svg w={14} h={9}><path d="M1.500 8 L7 2 L12.500 8" stroke="#1b1a19" strokeWidth="1.800" /></Svg>
        <Svg w={22} h={16} className="ml-[22px]"><path d="M6 15 Q1 15 1 10.500 Q1 6.500 5 6 Q6 1 11.500 1 Q16.500 1.500 17.500 6 Q21 7 21 11 Q20.500 15 17 15 Z" fill="#f4f4f4" stroke="#484644" strokeWidth="1.500" /><path d="M5 6 Q7 1.500 11.500 1.500 Q16 2 17 6 L11 11 Z" fill="#8a8886" /></Svg>
        <div className="ml-[22px] w-[30px] text-center text-[14.5px] leading-5 tracking-[-0.1px]"><div>ENG</div><div>IN</div></div>
        <Svg w={19} h={15} className="ml-[22px]"><path d="M1 5 Q9.500 -2 18 5" stroke="#8fa3a6" strokeWidth="1.500" /><path d="M4 8 Q9.500 3 15 8 M6.500 11 Q9.500 8 12.500 11" stroke="#1b1a19" strokeWidth="1.600" /><circle cx="9.500" cy="13" r="1.700" fill="#1b1a19" /></Svg>
        <Svg w={22} h={16} className="ml-[9px]"><path d="M1 5.500 H4.500 L9 1.500 V14.500 L4.500 10.500 H1 Z M12 5 Q14 8 12 11 M14.500 3 Q18 8 14.500 13 M17 1 Q22 8 17 15" stroke="#1b1a19" strokeWidth="1.400" /></Svg>
        <Svg w={21} h={14} className="ml-[9px]"><rect x="1" y="1" width="16" height="12" rx="2" stroke="#1b1a19" strokeWidth="1.600" /><rect x="4" y="4" width="4" height="6" fill="#1b1a19" /><path d="M19 5 V9" stroke="#1b1a19" strokeWidth="2" /></Svg>
        <div className="ml-[18px] w-[80px] text-right text-[15px] leading-[20px] tracking-[-0.05px] whitespace-nowrap"><div className="-mt-[3px]">13:10</div><div>04-12-2024</div></div>
        <Svg w={17} h={20} className="ml-[10px]"><path d="M8.500 0.500 Q14.500 1 14.500 8 L16.500 15.500 H0.500 L2.500 8 Q2.500 1 8.500 0.500Z M6 17 H11 Q10.500 19.500 8.500 19.500 Q6.500 19.500 6 17Z" fill="#16505c" /></Svg>
      </div>
    </div>
  );
}

export default function App() {
  return (
    <div className="w-[1918px] h-[1049px] flex flex-col overflow-hidden bg-[#f3f2f1] font-['Open_Sans','Noto_Sans',sans-serif]">
      <TitleBar />
      <Ribbon />
      <div className="flex flex-1 min-h-0">
        <LeftRail />
        <div className="w-[1418px] flex flex-col shrink-0">
          <div className="h-[41px] shrink-0 bg-[#f5f5f5] border-b border-[#c8c6c4] border-r border-r-[#e1dfdd] flex items-center pl-[17px] pr-[13px] text-[15px] text-[#323130]">
            <Svg w={20} h={20}><circle cx="10" cy="10" r="10" fill="#5c5a58" /><path d="M10 8.500 V15 M10 5 V7" stroke="#fff" strokeWidth="1.600" /></Svg>
            <span className="ml-[11px] tracking-[-0.4px]">Auto recovery contains some recovered files that haven't been opened.</span>
            <div className="ml-auto h-[30px] w-[152px] -mt-px rounded-[4px] bg-white text-center leading-[31px] tracking-[-0.35px]">View recovered files</div>
            <Svg w={14} h={14} className="ml-[17px] mt-[3px]"><path d="M1 1 L13 13 M13 1 L1 13" stroke="#484644" strokeWidth="1.300" /></Svg>
          </div>
          <div className="flex flex-1 min-h-0">
            <Canvas />
            <Filters />
          </div>
          <PageTabs />
        </div>
        <Visualizations />
        <DataPane />
      </div>
      <StatusBar />
      <Taskbar />
    </div>
  );
}
